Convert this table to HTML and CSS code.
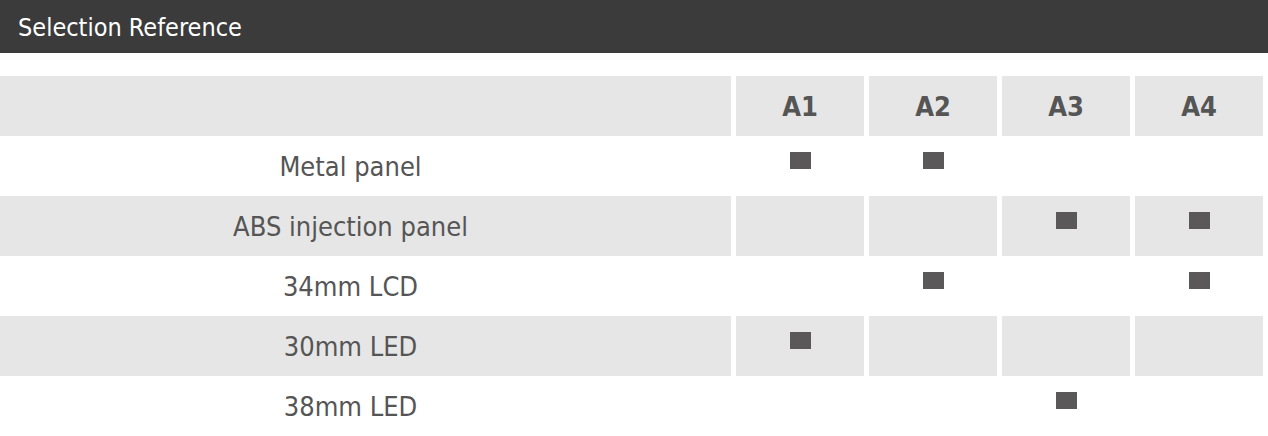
FILE: index.html
```html
<!DOCTYPE html>
<html>
<head>
<meta charset="utf-8">
<link rel="stylesheet" href="styles.css">
</head>
<body>
<div class="titlebar">Selection Reference</div>
<div class="table">
  <div class="row head grey">
    <div class="cell label"></div>
    <div class="cell">A1</div>
    <div class="cell">A2</div>
    <div class="cell">A3</div>
    <div class="cell">A4</div>
  </div>
  <div class="row">
    <div class="cell label">Metal panel</div>
    <div class="cell"><span class="mark"></span></div>
    <div class="cell"><span class="mark"></span></div>
    <div class="cell"></div>
    <div class="cell"></div>
  </div>
  <div class="row grey">
    <div class="cell label">ABS injection panel</div>
    <div class="cell"></div>
    <div class="cell"></div>
    <div class="cell"><span class="mark"></span></div>
    <div class="cell"><span class="mark"></span></div>
  </div>
  <div class="row">
    <div class="cell label">34mm LCD</div>
    <div class="cell"></div>
    <div class="cell"><span class="mark"></span></div>
    <div class="cell"></div>
    <div class="cell"><span class="mark"></span></div>
  </div>
  <div class="row grey">
    <div class="cell label">30mm LED</div>
    <div class="cell"><span class="mark"></span></div>
    <div class="cell"></div>
    <div class="cell"></div>
    <div class="cell"></div>
  </div>
  <div class="row">
    <div class="cell label">38mm LED</div>
    <div class="cell"></div>
    <div class="cell"></div>
    <div class="cell"><span class="mark"></span></div>
    <div class="cell"></div>
  </div>
</div>
</body>
</html>
```
FILE: styles.css
```css
html, body {
  margin: 0;
  padding: 0;
  background: #fff;
}
body {
  font-family: "DejaVu Sans Condensed", "DejaVu Sans", Verdana, sans-serif;
  color: #555;
}
.titlebar {
  height: 53px;
  background: #3b3b3b;
  color: #fff;
  font-size: 25px;
  line-height: 55px;
  padding-left: 18px;
  box-sizing: border-box;
}
.table {
  margin-top: 23px;
  width: 1263px;
}
.row {
  display: grid;
  grid-template-columns: 731px repeat(4, 128px);
  column-gap: 5px;
  height: 60px;
}
.cell {
  display: flex;
  align-items: center;
  justify-content: center;
  font-size: 27px;
  line-height: 30px;
  padding-top: 2px;
  box-sizing: border-box;
}
.cell.label {
  padding-right: 30px;
}
.grey .cell {
  background: #e6e6e6;
}
.head .cell {
  font-weight: bold;
  font-size: 27px;
}
.mark {
  display: block;
  width: 21px;
  height: 17px;
  background: #5a5859;
  margin-top: -14px;
}
```
